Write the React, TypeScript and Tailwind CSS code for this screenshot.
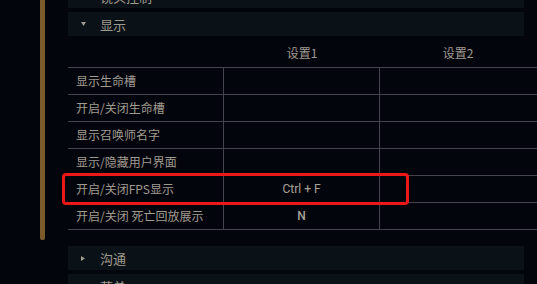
import React from "react";

const ROWS = [
  { label: "显示生命槽", k1: "" },
  { label: "开启/关闭生命槽", k1: "" },
  { label: "显示召唤师名字", k1: "" },
  { label: "显示/隐藏用户界面", k1: "" },
  { label: "开启/关闭FPS显示", k1: "Ctrl + F" },
  { label: "开启/关闭 死亡回放展示", k1: "N" },
];

const CJK = { fontFamily: '"Noto Sans CJK SC", "Noto Sans", sans-serif' };

function SectionBar({ title, open }: { title: string; open?: boolean }) {
  return (
    <div className="flex h-[24px] w-[456px] items-center bg-[#0a1218]">
      <span className="flex w-[32px] justify-start pl-[13px]">
        {open ? (
          <svg width="5" height="4" viewBox="0 0 5 4">
            <path d="M0 0 H5 L2.5 4 Z" fill="#a09b8f" />
          </svg>
        ) : (
          <svg width="4" height="5" viewBox="0 0 4 5">
            <path d="M0 0 V5 L4 2.5 Z" fill="#a09b8f" />
          </svg>
        )}
      </span>
      <span className="text-[13px] leading-none text-[#a09b8f]" style={CJK}>
        {title}
      </span>
    </div>
  );
}

export default function App() {
  return (
    <div className="relative h-[284px] w-[537px] overflow-hidden bg-[#03050d]">
      <div className="flex">
        {/* left scrollbar */}
        <div className="ml-[40px] h-[240px] w-[5px] rounded-b-[2px] bg-[#7b5a2b]" />

        <div className="ml-[23px] flex w-[469px] flex-col">
          <div className="-mt-[16px]">
            <SectionBar title="镜头控制" open />
          </div>
          <div className="mt-[4px]">
            <SectionBar title="显示" open />
          </div>

          {/* column headers */}
          <div className="flex h-[31px] items-center pt-[2px] text-[12px] text-[#a09b8f]" style={CJK}>
            <div className="w-[156px]" />
            <div className="w-[156px] text-center">设置1</div>
            <div className="w-[156px] text-center">设置2</div>
          </div>

          {/* table */}
          <div className="w-[469px] border-t border-[#45434d]">
            {ROWS.map((r) => (
              <div key={r.label} className="flex h-[27px] border-b border-[#45434d]">
                <div
                  className="flex w-[156px] items-center border-r border-[#45434d] pl-[8px] text-[12px] text-[#a09b8f]"
                  style={CJK}
                >
                  {r.label}
                </div>
                <div
                  className={`flex w-[156px] items-center justify-center border-r border-[#45434d] text-[12px] text-[#a8a398] ${
                    r.k1 === "N" ? "font-medium" : "font-normal"
                  }`}
                  style={{ fontFamily: 'Roboto, "Noto Sans", sans-serif' }}
                >
                  {r.k1}
                </div>
                <div className="w-[157px]" />
              </div>
            ))}
          </div>

          <div className="mt-[16px]">
            <SectionBar title="沟通" />
          </div>
          <div className="mt-[4px]">
            <SectionBar title="菜单" />
          </div>
        </div>
      </div>

      {/* highlight box */}
      <div className="absolute left-[62px] top-[173px] h-[32px] w-[347px] rounded-[4px] border-[3px] border-[#ec1717]" />
    </div>
  );
}
